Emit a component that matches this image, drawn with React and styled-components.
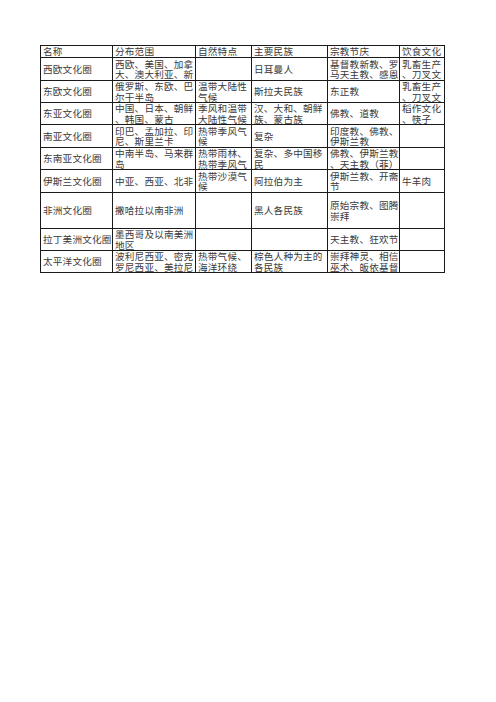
import React from 'react';
import styled, {createGlobalStyle} from 'styled-components';

const GlobalStyle = createGlobalStyle`
  html, body {
    margin: 0;
    padding: 0;
    background: #ffffff;
  }
  body {
    font-family: "Noto Sans CJK SC", "DejaVu Sans", sans-serif;
  }
`

const columns = [72, 83, 56, 76, 72, 45];
const rowHeights = [12, 23, 22, 22, 23, 22, 23, 36, 22, 22];

const header = ['名称', '分布范围', '自然特点', '主要民族', '宗教节庆', '饮食文化'];

const rows = [
  ['西欧文化圈', ['西欧、美国、加拿', '大、澳大利亚、新'], '', '日耳曼人', ['基督教新教、罗', '马天主教、感恩'], ['乳畜生产', '、刀叉文']],
  ['东欧文化圈', ['俄罗斯、东欧、巴', '尔干半岛'], ['温带大陆性', '气候'], '斯拉夫民族', '东正教', ['乳畜生产', '、刀叉文']],
  ['东亚文化圈', ['中国、日本、朝鲜', '、韩国、蒙古'], ['季风和温带', '大陆性气候'], ['汉、大和、朝鲜', '族、蒙古族'], '佛教、道教', ['稻作文化', '、筷子']],
  ['南亚文化圈', ['印巴、孟加拉、印', '尼、斯里兰卡'], ['热带季风气', '候'], '复杂', ['印度教、佛教、', '伊斯兰教'], ''],
  ['东南亚文化圈', ['中南半岛、马来群', '岛'], ['热带雨林、', '热带季风气'], ['复杂、多中国移', '民'], ['佛教、伊斯兰教', '、天主教（菲）'], ''],
  ['伊斯兰文化圈', '中亚、西亚、北非', ['热带沙漠气', '候'], '阿拉伯为主', ['伊斯兰教、开斋', '节'], '牛羊肉'],
  ['非洲文化圈', '撒哈拉以南非洲', '', '黑人各民族', ['原始宗教、图腾', '崇拜'], ''],
  ['拉丁美洲文化圈', ['墨西哥及以南美洲', '地区'], '', '', '天主教、狂欢节', ''],
  ['太平洋文化圈', ['波利尼西亚、密克', '罗尼西亚、美拉尼'], ['热带气候、', '海洋环绕'], ['棕色人种为主的', '各民族'], ['崇拜神灵、相信', '巫术、皈依基督'], ''],
];

export default function App() {
  return (
    <Page>
      <GlobalStyle />
      <Sheet $cols={columns} $rows={rowHeights}>
        {header.map((h) => (
          <Cell key={h} $head>
            <Line>{h}</Line>
          </Cell>
        ))}
        {rows.map((row, ri) =>
          row.map((value, ci) => (
            <Cell key={ri + '-' + ci}>
              {(Array.isArray(value) ? value : value ? [value] : []).map((line, li) => (
                <Line key={li}>{line}</Line>
              ))}
            </Cell>
          ))
        )}
      </Sheet>
    </Page>
  );
}

const Page = styled.div`
  width: 496px;
  min-height: 702px;
  padding: 45px 0 0 40px;
  box-sizing: border-box;
  background: #ffffff;
`

const Sheet = styled.div`
  display: grid;
  grid-template-columns: ${(p) => p.$cols.map((c) => c + 'px').join(' ')};
  grid-template-rows: ${(p) => p.$rows.map((r) => r + 'px').join(' ')};
  width: max-content;
  border-top: 1px solid #1a1a1a;
  border-left: 1px solid #1a1a1a;
  box-sizing: border-box;
`

const Cell = styled.div`
  display: flex;
  flex-direction: column;
  justify-content: ${(p) => (p.$head ? 'flex-start' : 'center')};
  overflow: hidden;
  padding: 0 1px 0 2px;
  box-sizing: border-box;
  border-right: 1px solid #1a1a1a;
  border-bottom: 1px solid #1a1a1a;
  color: #3a3a3a;
  font-size: 9.6px;
  line-height: ${(p) => (p.$head ? '11px' : '10.5px')};
  letter-spacing: 0.2px;
`

const Line = styled.div`
  white-space: nowrap;
  flex-shrink: 0;
`
